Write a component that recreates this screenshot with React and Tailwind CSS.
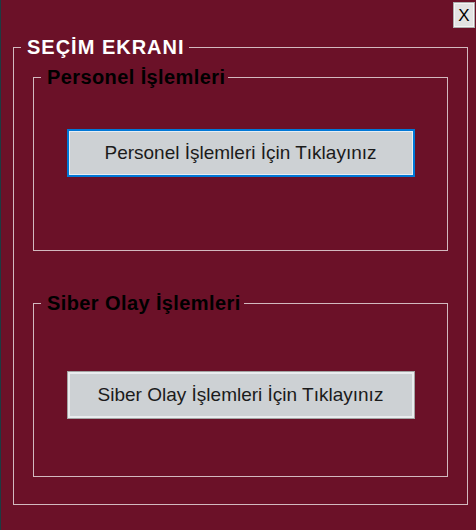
import React from 'react';

const font = { fontFamily: '"Liberation Sans", Arial, sans-serif' };

function GroupBox({ title, children, className = '' }) {
  return (
    <fieldset className={`border border-[#d2b9bf] px-0 ${className}`}>
      <legend className="ml-[7px] pl-[6px] pr-[3px] text-[20px] font-bold leading-[20px] tracking-[0.4px] text-black">
        {title}
      </legend>
      {children}
    </fieldset>
  );
}

export default function App() {
  return (
    <div
      className="relative h-[530px] w-[476px] overflow-hidden border-l border-[#1d3b42] bg-[#6b1128]"
      style={font}
    >
      {/* close button */}
      <button className="absolute right-[1px] top-[2px] flex h-[26px] w-[22px] items-center justify-center border border-[#adadad] bg-[#e3e3e3] text-[17px] leading-none text-black shadow-[inset_0_0_0_1px_#f4f4f4]">
        X
      </button>

      <fieldset className="ml-[12px] mt-[37px] w-[455px] border border-[#d2b9bf] px-0 pb-[27px] pt-[10px]">
        <legend className="ml-[7px] pl-[6px] pr-[4px] text-[20px] font-bold leading-[20px] tracking-[1px] text-white">
          SEÇİM EKRANI
        </legend>

        <div className="flex flex-col items-center gap-[42px]">
          <GroupBox title="Personel İşlemleri" className="h-[184px] w-[415px]">
            <div className="flex justify-center pt-[42px]">
              <button className="h-[48px] w-[348px] border-2 border-[#0078d7] bg-[#cdd1d4] text-[19px] text-[#1b1b1b] shadow-[inset_0_0_0_1px_#e6eef5]">
                Personel İşlemleri İçin Tıklayınız
              </button>
            </div>
          </GroupBox>

          <GroupBox title="Siber Olay İşlemleri" className="h-[184px] w-[415px]">
            <div className="flex justify-center pt-[58px]">
              <button className="h-[48px] w-[348px] border border-[#a3a3a3] bg-[#cdd1d4] text-[19px] text-[#1b1b1b] shadow-[inset_0_0_0_2px_#e9ecee]">
                Siber Olay İşlemleri İçin Tıklayınız
              </button>
            </div>
          </GroupBox>
        </div>
      </fieldset>
    </div>
  );
}
